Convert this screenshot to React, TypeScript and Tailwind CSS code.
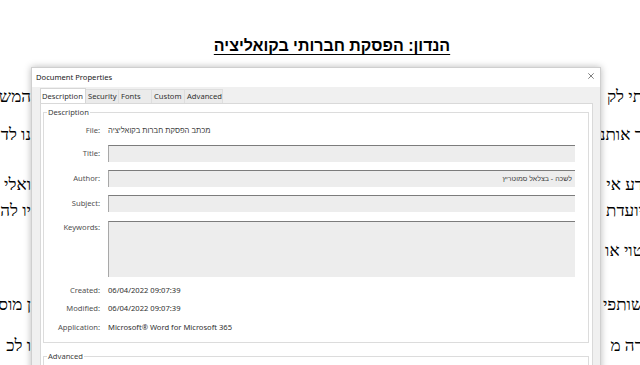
import React from "react";

const ui = { fontFamily: '"Noto Sans", "Liberation Sans", "DejaVu Sans", sans-serif' };
const doc = { fontFamily: '"Liberation Serif", "DejaVu Serif", serif' };

type Line = { left?: string; right?: string; mt: number };

const lines: Line[] = [
  { left: "המש", right: "תי לק", mt: 0 },
  { left: "נו לד", right: "ר אותנ", mt: 18 },
  { left: "ואלי", right: "דע אי", mt: 30 },
  { left: "יו לה", right: "יועדת", mt: 6 },
  { right: "טוי או", mt: 20 },
  { left: "ן מוס", right: "שותפי", mt: 34 },
  { left: "ו לכ", right: "רה מ", mt: 21 },
];

function Field({ label, children, tall, value }: { label: string; children?: React.ReactNode; tall?: boolean; value?: string }) {
  return (
    <div className={`flex ${tall ? "items-start" : "items-center"}`}>
      <div className={`w-[56px] shrink-0 text-right text-[#505050] ${tall ? "leading-[13px]" : ""}`}>{label}</div>
      <div className="ml-[8px] flex-1 pr-[13px]">
        {children ?? (
          <div
            dir="rtl"
            className={`${tall ? "h-[56px]" : "h-[17px]"} w-full bg-[#ededed] border-t border-l border-t-[#7c7c7c] border-l-[#a8a8a8] px-[3px] text-[#404040] text-[7px] leading-[16px]`}
            style={{ fontFamily: '"Liberation Sans", "DejaVu Sans", sans-serif' }}
          >
            {value}
          </div>
        )}
      </div>
    </div>
  );
}

function Row({ label, value, cls }: { label: string; value: string; cls?: string }) {
  return (
    <div className={`h-[18px] flex items-center ${cls ?? ""}`}>
      <div className="w-[56px] text-right text-[#505050]">{label}</div>
      <div className="ml-[8px]">{value}</div>
    </div>
  );
}

export default function App() {
  return (
    <div className="relative w-[640px] h-[365px] overflow-hidden bg-white" style={doc}>
      {/* background document */}
      <div className="pt-[35px]">
        <div className="flex justify-center pl-[24px]">
          <div dir="rtl" className="text-[16px] font-bold underline underline-offset-[3px] leading-[22px] text-black" style={{ fontFamily: '"Liberation Sans", "DejaVu Sans", sans-serif' }}>
            הנדון: הפסקת חברותי בקואליציה
          </div>
        </div>
        <div className="mt-[30px]">
          {lines.map((l, i) => (
            <div key={i} className="flex justify-between h-[20px] leading-[20px] text-[17px] text-black" style={{ marginTop: l.mt }}>
              <div dir="rtl" className="w-[31px] whitespace-nowrap text-right">{l.left ?? ""}</div>
              <div dir="rtl" className="w-[41px] -mr-[3px] whitespace-nowrap text-right">{l.right ?? ""}</div>
            </div>
          ))}
        </div>
      </div>

      {/* dialog */}
      <div
        className="absolute left-[31px] top-[67px] w-[570px] h-[330px] flex flex-col bg-[#f0f0f0] border border-[#cfcfcf] shadow-[0_0_7px_rgba(0,0,0,0.28)] text-[7.6px] text-[#303030]"
        style={ui}
      >
        <div className="h-[19px] shrink-0 bg-white flex items-center justify-between pl-[4px] pr-[6px]">
          <span className="text-[#202020] text-[7.6px]">Document Properties</span>
          <svg width="6" height="6" viewBox="0 0 6 6" className="mt-[-4px]">
            <path d="M0.3 0.3 L5.7 5.7 M5.7 0.3 L0.3 5.7" stroke="#606060" strokeWidth="0.8" />
          </svg>
        </div>
        <div className="flex-1 min-h-0 flex flex-col pl-[8px] pr-[7px]">
          <div className="h-[16px] shrink-0 flex items-end">
            <div className="h-[15px] w-[46px] bg-white border border-b-0 border-[#d6d6d6] pl-[1px] leading-[14px]">Description</div>
            <div className="h-[14px] w-[33px] pl-[2px] leading-[13px] border-t border-r border-[#dedede] bg-[#ebebeb]">Security</div>
            <div className="h-[14px] w-[33px] pl-[2px] leading-[13px] border-t border-r border-[#dedede] bg-[#ebebeb]">Fonts</div>
            <div className="h-[14px] w-[33px] pl-[2px] leading-[13px] border-t border-r border-[#dedede] bg-[#ebebeb]">Custom</div>
            <div className="h-[14px] w-[38px] pl-[2px] leading-[13px] border-t border-r border-[#dedede] bg-[#ebebeb]">Advanced</div>
          </div>
          <div className="flex-1 min-h-0 overflow-hidden bg-white border border-[#d9d9d9] pl-[2px] pr-[3px]">
            <fieldset className="mt-[3px] border border-[#dcdcdc] px-0 pb-[5px]">
              <legend className="ml-[3px] px-[1px] text-[#404040] leading-[10px]">Description</legend>
              <div className="flex flex-col pt-[5px]">
                <Field label="File:">
                  <div dir="rtl" className="h-[17px] leading-[17px] text-right w-fit text-[#404040] text-[7.6px]" style={{ fontFamily: '"Liberation Sans", "DejaVu Sans", sans-serif' }}>
                    מכתב הפסקת חברות בקואליציה
                  </div>
                </Field>
                <div className="mt-[6px]"><Field label="Title:" /></div>
                <div className="mt-[8px]"><Field label="Author:" value="לשכה - בצלאל סמוטריץ" /></div>
                <div className="mt-[8px]"><Field label="Subject:" /></div>
                <div className="mt-[9px]"><Field label="Keywords:" tall /></div>
                <Row label="Created:" value="06/04/2022 09:07:39" cls="mt-[5px]" />
                <Row label="Modified:" value="06/04/2022 09:07:39" />
                <Row label="Application:" value="Microsoft® Word for Microsoft 365" cls="mt-[1px]" />
              </div>
            </fieldset>
            <fieldset className="mt-[8px] border-t border-l border-r border-[#dcdcdc] h-[40px]">
              <legend className="ml-[3px] px-[1px] text-[#404040] leading-[10px]">Advanced</legend>
            </fieldset>
          </div>
        </div>
      </div>
    </div>
  );
}
